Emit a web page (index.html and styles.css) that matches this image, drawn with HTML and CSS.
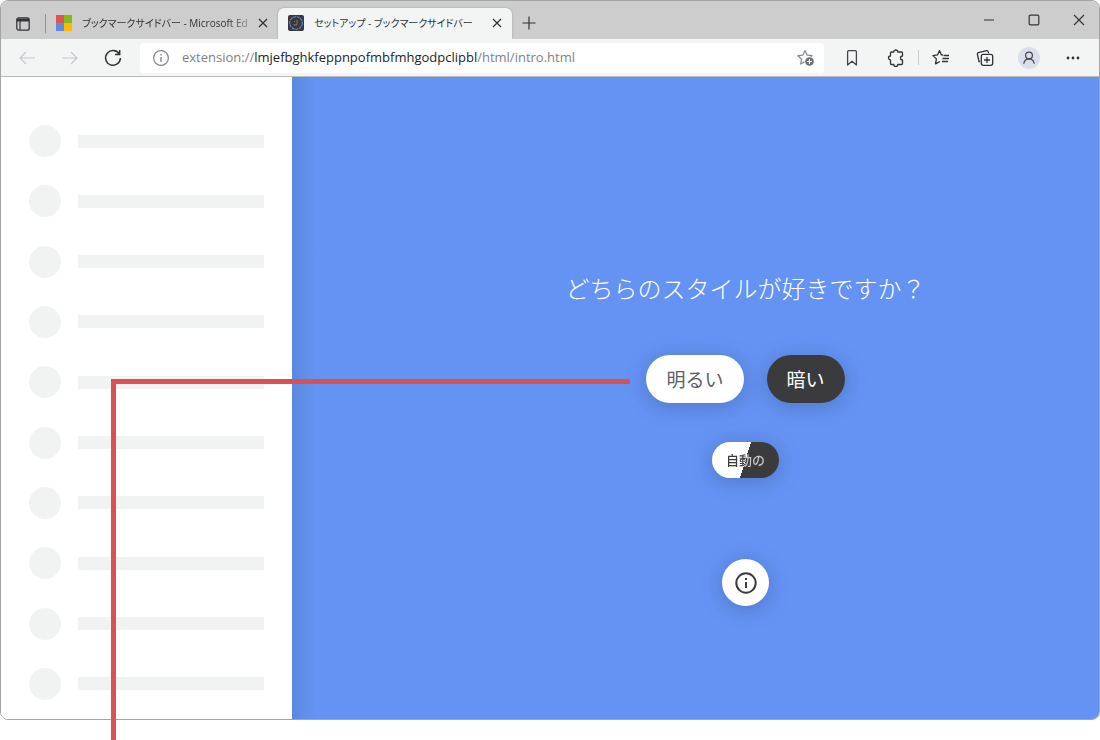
FILE: index.html
```html
<!DOCTYPE html>
<html lang="ja">
<head>
<meta charset="utf-8">
<title>セットアップ - ブックマークサイドバー</title>
<link rel="stylesheet" href="styles.css">
</head>
<body>
<div class="window">
  <header class="tabbar">
    <button class="tab-actions" aria-label="タブ操作">
      <svg width="16" height="16" viewBox="0 0 16 16"><rect x="1.8" y="1.8" width="12.4" height="12.4" rx="2" fill="none" stroke="#35363a" stroke-width="1.3"/><path d="M2 2.5h12v3H2z" fill="#35363a"/><path d="M5 5v9" stroke="#35363a" stroke-width="1.2"/></svg>
    </button>
    <span class="tab-divider"></span>
    <div class="tab">
      <svg width="16" height="16" viewBox="0 0 16 16"><path d="M0 0h8v8H0z" fill="#df5350"/><path d="M8 0h8v8H8z" fill="#82bb17"/><path d="M0 8h8v8H0z" fill="#5a8be0"/><path d="M8 8h8v8H8z" fill="#fdb80a"/></svg>
      <span class="tab-title tab-title-faded">ブックマークサイドバー - Microsoft Ed</span>
      <button class="tab-close" aria-label="タブを閉じる"><svg width="10" height="10" viewBox="0 0 10 10"><path d="M1 1l8 8M9 1L1 9" stroke="#333" stroke-width="1.3"/></svg></button>
    </div>
    <div class="tab tab-active">
      <svg width="16" height="16" viewBox="0 0 16 16"><rect width="16" height="16" rx="2" fill="#39393b"/><circle cx="8" cy="8" r="6.3" fill="none" stroke="#5b8be6" stroke-width="1.1" stroke-dasharray="3 .7"/><path d="M6 6.5h1M9 5v5H6V9" fill="none" stroke="#777a80"/></svg>
      <span class="tab-title">セットアップ - ブックマークサイドバー</span>
      <button class="tab-close" aria-label="タブを閉じる"><svg width="10" height="10" viewBox="0 0 10 10"><path d="M1 1l8 8M9 1L1 9" stroke="#333" stroke-width="1.3"/></svg></button>
    </div>
    <button class="new-tab" aria-label="新しいタブ"><svg width="14" height="14" viewBox="0 0 14 14"><path d="M7 .5v13M.5 7h13" stroke="#333" stroke-width="1.2"/></svg></button>
    <div class="controls">
      <button aria-label="最小化"><svg width="12" height="12" viewBox="0 0 12 12"><path d="M1 6h10" stroke="#666" stroke-width="1.6"/></svg></button>
      <button aria-label="最大化"><svg width="12" height="12" viewBox="0 0 12 12"><rect x="1.2" y="1.2" width="9.6" height="9.6" rx="1" fill="none" stroke="#35363a" stroke-width="1.2"/></svg></button>
      <button aria-label="閉じる"><svg width="12" height="12" viewBox="0 0 12 12"><path d="M1 1l10 10M11 1L1 11" stroke="#35363a" stroke-width="1.2"/></svg></button>
    </div>
  </header>

  <nav class="toolbar" aria-label="ツールバー">
    <div class="nav-buttons">
      <button aria-label="戻る" disabled><svg width="18" height="18" viewBox="0 0 18 18" fill="none" stroke="#c3c6cb" stroke-width="1.1"><path d="M17 9H2M8 3L2 9l6 6"/></svg></button>
      <button aria-label="進む" disabled><svg width="18" height="18" viewBox="0 0 18 18" fill="none" stroke="#c3c6cb" stroke-width="1.1"><path d="M1 9h15M10 3l6 6-6 6"/></svg></button>
      <button aria-label="再読み込み"><svg width="18" height="18" viewBox="0 0 18 18" fill="none" stroke="#303236" stroke-width="1.5"><path d="M15.3 5A7.4 7.4 0 1 0 16.4 9M15.7 1v4.6H11"/></svg></button>
    </div>
    <div class="address">
      <svg width="18" height="18" viewBox="0 0 18 18" fill="none" stroke="#85888e" stroke-width="1.2"><circle cx="9" cy="9" r="7.4"/><path d="M9 8v5M9 5v1.5" stroke-width="1.4"/></svg>
      <a class="url" href="#">extension://<span class="host">lmjefbghkfeppnpofmbfmhgodpclipbl</span>/html/intro.html</a>
      <button aria-label="お気に入りに追加"><svg width="18" height="18" viewBox="0 0 18 18"><path d="M8 1.5l2.1 4.6 5 .6-3.7 3.5 1 4.8L8 12.6 3.6 15l1-4.8L.9 6.700l5-.6z" fill="none" stroke="#85888e" stroke-width="1.2" stroke-linejoin="round"/><circle cx="12.5" cy="12.5" r="5" fill="#fff"/><circle cx="12.5" cy="12.5" r="4.3" fill="#6c6f75"/><path d="M12.5 10v5M10 12.5h5" stroke="#fff" stroke-width="1.1"/></svg></button>
    </div>
    <div class="tools">
      <button aria-label="ブックマーク"><svg width="18" height="18" viewBox="0 0 18 18" fill="none" stroke="#44464b" stroke-width="1.3"><path d="M4.600 16V2.700q0-1 1-1h6.800q1 0 1 1V16L9 12.300z" stroke-linejoin="round"/></svg></button>
      <button aria-label="拡張機能"><svg width="18" height="18" viewBox="0 0 18 18" fill="none" stroke="#303236" stroke-width="1.3"><path d="M4.500 3h2.300a2 2 0 0 1 4 0h3.700q1 0 1 1v3a2 2 0 1 0 0 4v3.500q0 1-1 1h-3.700a2 2 0 0 1-4 0H4.500q-1 0-1-1V11a2 2 0 1 1 0-4V4q0-1 1-1z" stroke-linejoin="round"/></svg></button>
      <span class="tool-divider"></span>
      <button aria-label="お気に入り"><svg width="18" height="18" viewBox="0 0 18 18" fill="none" stroke="#303236" stroke-width="1.3"><path d="M11 6L9.300 5.800 7.500 1.500 5.500 5.900.9 6.600l3.500 3.300-.9 5L8 12.500" stroke-linejoin="round"/><path d="M11.500 6.500H17M10.500 9.500H17M10 12.500h6"/></svg></button>
      <button aria-label="コレクション"><svg width="18" height="18" viewBox="0 0 18 18" fill="none" stroke="#303236" stroke-width="1.3"><path d="M4 12.500H3L1.400 5.300q-.2-1.300 1-1.600l8.200-2q1.300-.2 1.600 1L12.600 4"/><rect x="5.300" y="5.300" width="11.400" height="11" rx="2"/><path d="M11 8v6M8 11h6"/></svg></button>
      <button class="profile" aria-label="プロフィール"><svg width="22" height="22" viewBox="0 0 22 22" fill="none" stroke="#44464b" stroke-width="1.2"><circle cx="11" cy="11" r="11" fill="#d9dfeb" stroke="none"/><circle cx="11" cy="8.500" r="3.400"/><path d="M5.800 16.800q.4-4.600 5.200-4.900 4.800.3 5.200 4.900"/></svg></button>
      <button aria-label="設定など"><svg width="18" height="18" viewBox="0 0 18 18" fill="#303236"><circle cx="4" cy="9" r="1.4"/><circle cx="9" cy="9" r="1.4"/><circle cx="14" cy="9" r="1.4"/></svg></button>
    </div>
  </nav>

  <div class="page">
    <aside class="sidebar" aria-hidden="true">
      <div class="row"><i class="dot"></i><i class="bar"></i></div>
      <div class="row"><i class="dot"></i><i class="bar"></i></div>
      <div class="row"><i class="dot"></i><i class="bar"></i></div>
      <div class="row"><i class="dot"></i><i class="bar"></i></div>
      <div class="row"><i class="dot"></i><i class="bar"></i></div>
      <div class="row"><i class="dot"></i><i class="bar"></i></div>
      <div class="row"><i class="dot"></i><i class="bar"></i></div>
      <div class="row"><i class="dot"></i><i class="bar"></i></div>
      <div class="row"><i class="dot"></i><i class="bar"></i></div>
      <div class="row"><i class="dot"></i><i class="bar"></i></div>
    </aside>
    <main class="intro">
      <h1>どちらのスタイルが好きですか？</h1>
      <div class="choices">
        <button class="pill light">明るい</button>
        <button class="pill dark">暗い</button>
      </div>
      <button class="pill auto"><span>自動の</span></button>
      <button class="info" aria-label="情報"><svg width="24" height="24" viewBox="0 0 24 24" fill="none" stroke="#3b3b3d" stroke-width="2"><circle cx="12" cy="12" r="9.7"/><path d="M12 11v6M12 7v2"/></svg></button>
    </main>
  </div>
</div>
<div class="callout"></div>
</body>
</html>
```
FILE: styles.css
```css
* { box-sizing: border-box; }

body {
  margin: 0;
  min-height: 100vh;
  padding-bottom: 20px;
  display: flex;
  flex-direction: column;
  position: relative;
  background: #fff;
  color: #303236;
  font-family: "Open Sans", "Noto Sans CJK JP", sans-serif;
}

button {
  display: flex;
  align-items: center;
  justify-content: center;
  margin: 0;
  padding: 0;
  border: 0;
  background: none;
  font-family: inherit;
}

svg { display: block; flex: none; }

.window {
  flex: 1;
  display: flex;
  flex-direction: column;
  border: 1px solid #a5a5a5;
  border-radius: 8px;
  overflow: hidden;
}

.tabbar {
  display: flex;
  height: 38px;
  padding-top: 7px;
  background: #cdcdcd;
}

.tab-actions { width: 44px; height: 31px; }

.tab-divider {
  width: 1px;
  height: 19px;
  margin-top: 6px;
  background: #8f9196;
}

.tab {
  display: flex;
  align-items: center;
  width: 232px;
  height: 30px;
  padding: 0 6px 0 10px;
}

.tab-active {
  width: 234px;
  height: 31px;
  padding-bottom: 1px;
  background: #f3f5f5;
  border-radius: 6px 6px 0 0;
  box-shadow: 0 0 2px #8f939b;
}

.tab-title {
  flex: 1;
  min-width: 0;
  margin-left: 10px;
  white-space: nowrap;
  font-size: 10px;
  line-height: 20px;
  font-feature-settings: "palt";
}

.tab-title-faded {
  mask-image: linear-gradient(to right, #000 85%, rgba(0, 0, 0, 0.2));
}

.tab-close { width: 18px; height: 20px; }

.new-tab { width: 34px; height: 30px; }

.controls { display: flex; margin-left: auto; margin-right: -2px; }
.controls button { width: 45px; height: 23px; }

.toolbar {
  display: flex;
  align-items: center;
  height: 38px;
  padding: 0 4px;
  background: #f3f5f5;
  border-bottom: 1px solid #b9bbbb;
}

.nav-buttons { display: flex; }
.nav-buttons button { width: 43px; height: 30px; }

.address {
  flex: 1;
  display: flex;
  align-items: center;
  gap: 12px;
  height: 30px;
  margin: 0 6px;
  padding: 0 9px 0 12px;
  border-radius: 4px;
  background: #fff;
}

.url {
  flex: 1;
  font-size: 13px;
  line-height: 20px;
  padding-bottom: 1px;
  color: #7e8187;
  text-decoration: none;
}

.host { color: #222429; }

.tools { display: flex; align-items: center; }
.tools button { width: 44px; height: 30px; }

.tool-divider {
  width: 1px;
  height: 15px;
  background: #c9cbcb;
}

.page { flex: 1; display: flex; }

.sidebar {
  display: flex;
  flex-direction: column;
  justify-content: space-between;
  width: 291px;
  padding: 48px 28px 19px;
  background: #fff;
}

.row { display: flex; align-items: center; gap: 17px; }
.dot { width: 32px; height: 32px; border-radius: 50%; background: #f1f3f3; }
.bar { flex: 1; height: 13px; background: #f1f3f3; }

.intro {
  flex: 1;
  display: flex;
  flex-direction: column;
  align-items: center;
  padding: 193px 0 0 100px;
  background: linear-gradient(to right, #5a89e0, #6593f4 24px);
}

h1 {
  margin: 0 0 49px;
  font-family: "Noto Sans CJK JP", sans-serif;
  font-size: 24px;
  line-height: 36px;
  font-weight: 300;
  color: #fff;
}

.choices { display: flex; gap: 23px; }

.pill {
  height: 48px;
  padding: 0 20px 2px;
  border-radius: 24px;
  font-family: "Noto Sans CJK JP", sans-serif;
  font-size: 19px;
  box-shadow: 0 3px 18px 2px rgba(60, 90, 150, 0.4);
}

.light { background: #fff; color: #5d6065; }
.dark { background: #3b3b3d; color: #fff; }

.auto {
  height: 36px;
  margin-top: 39px;
  padding: 0 14px 2px;
  font-size: 13px;
  font-weight: 500;
  background: linear-gradient(107deg, #fff 50%, #3b3b3d 50%);
}

.auto span {
  color: transparent;
  background: linear-gradient(107deg, #3b3b3d 50%, #c8cacd 50%);
  background-clip: text;
}

.info {
  width: 47px;
  height: 47px;
  margin-top: 81px;
  border-radius: 50%;
  background: #fff;
  box-shadow: 0 3px 18px 2px rgba(60, 90, 150, 0.4);
}

.callout {
  position: absolute;
  left: 111px;
  top: 379px;
  bottom: 0;
  width: 519px;
  border: solid #da524f;
  border-width: 5px 0 0 5px;
  pointer-events: none;
}
```
